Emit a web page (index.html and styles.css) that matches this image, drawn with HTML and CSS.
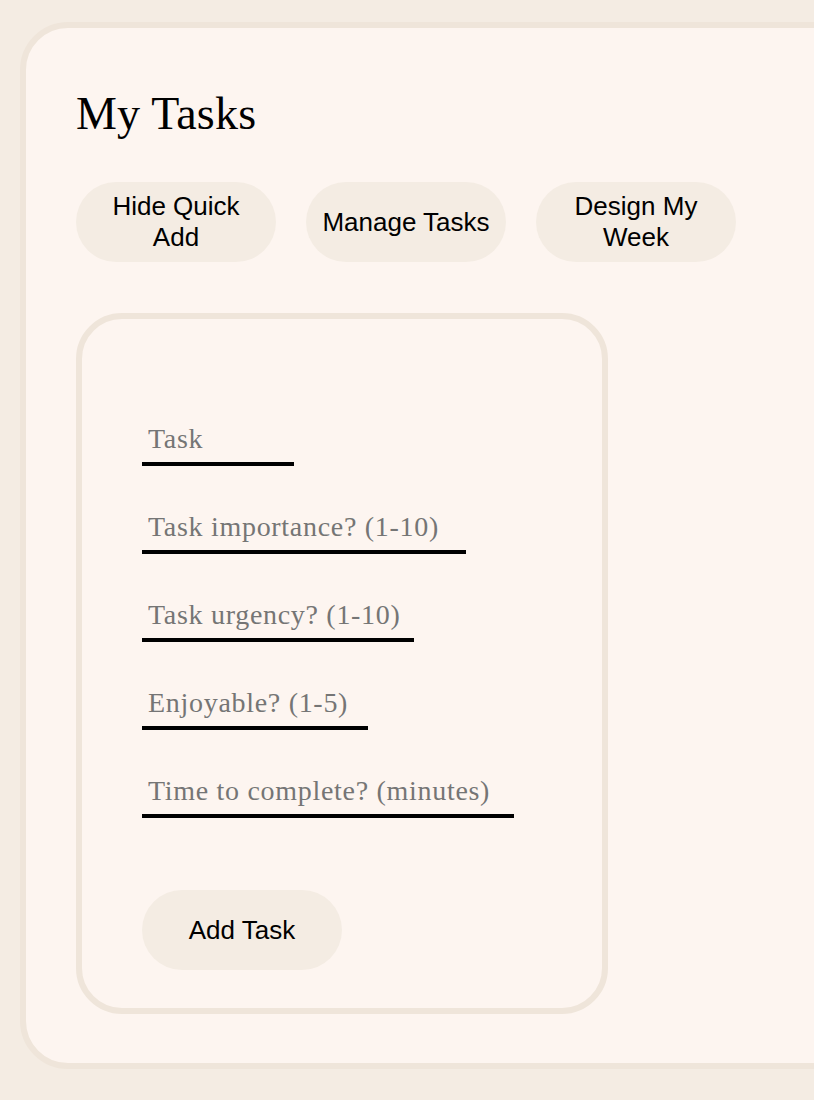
FILE: index.html
```html
<!DOCTYPE html>
<html lang="en">
<head>
<meta charset="utf-8">
<title>My Tasks</title>
<link rel="stylesheet" href="styles.css">
</head>
<body>
  <main class="panel">
    <h1 class="title">My Tasks</h1>
    <div class="actions">
      <button class="pill">Hide Quick Add</button>
      <button class="pill">Manage Tasks</button>
      <button class="pill">Design My Week</button>
    </div>
    <form class="quick-add">
      <input class="field w-task" type="text" placeholder="Task">
      <input class="field w-importance" type="text" placeholder="Task importance? (1-10)">
      <input class="field w-urgency" type="text" placeholder="Task urgency? (1-10)">
      <input class="field w-enjoy" type="text" placeholder="Enjoyable? (1-5)">
      <input class="field w-time" type="text" placeholder="Time to complete? (minutes)">
      <button class="pill add" type="button">Add Task</button>
    </form>
  </main>
</body>
</html>
```

FILE: styles.css
```css
html {
  overflow: hidden;
  background: #f4ece3;
}

body {
  margin: 0;
  padding: 22px 0 0 20px;
  background: #f4ece3;
  min-height: 1100px;
  box-sizing: border-box;
}

.panel {
  width: 900px;
  box-sizing: border-box;
  background: #fdf5f0;
  border: 6px solid #efe5da;
  border-radius: 48px;
  padding: 50px 50px 49px 50px;
}

.title {
  margin: 6px 0 38px 0;
  font-family: "Liberation Serif", "Times New Roman", serif;
  font-weight: 400;
  font-size: 46px;
  line-height: 60px;
  letter-spacing: 0.2px;
  color: #000;
}

.actions {
  display: flex;
  gap: 30px;
}

.pill {
  width: 200px;
  height: 80px;
  padding: 0 12px;
  border: none;
  border-radius: 40px;
  background: #f4ece3;
  color: #000;
  font-family: "Liberation Sans", Arial, sans-serif;
  font-size: 26px;
  line-height: normal;
  text-align: center;
  cursor: pointer;
}

.quick-add {
  margin-top: 51px;
  width: 532px;
  box-sizing: border-box;
  border: 6px solid #efe5da;
  border-radius: 46px;
  padding: 98px 60px 38px 60px;
  display: flex;
  flex-direction: column;
  align-items: flex-start;
}

.field {
  display: block;
  box-sizing: border-box;
  height: 49px;
  margin: 0 0 39px 0;
  padding: 6px 6px 7px 6px;
  border: none;
  border-bottom: 4px solid #000;
  background: transparent;
  outline: none;
  font-family: "Liberation Serif", "Times New Roman", serif;
  font-size: 28px;
  line-height: 32px;
  letter-spacing: 0.7px;
  color: #000;
}

.field::placeholder {
  color: #757575;
}

.w-task { width: 152px; }
.w-importance { width: 324px; }
.w-urgency { width: 272px; }
.w-enjoy { width: 226px; }
.w-time { width: 372px; }

.add {
  margin-top: 33px;
}
```
